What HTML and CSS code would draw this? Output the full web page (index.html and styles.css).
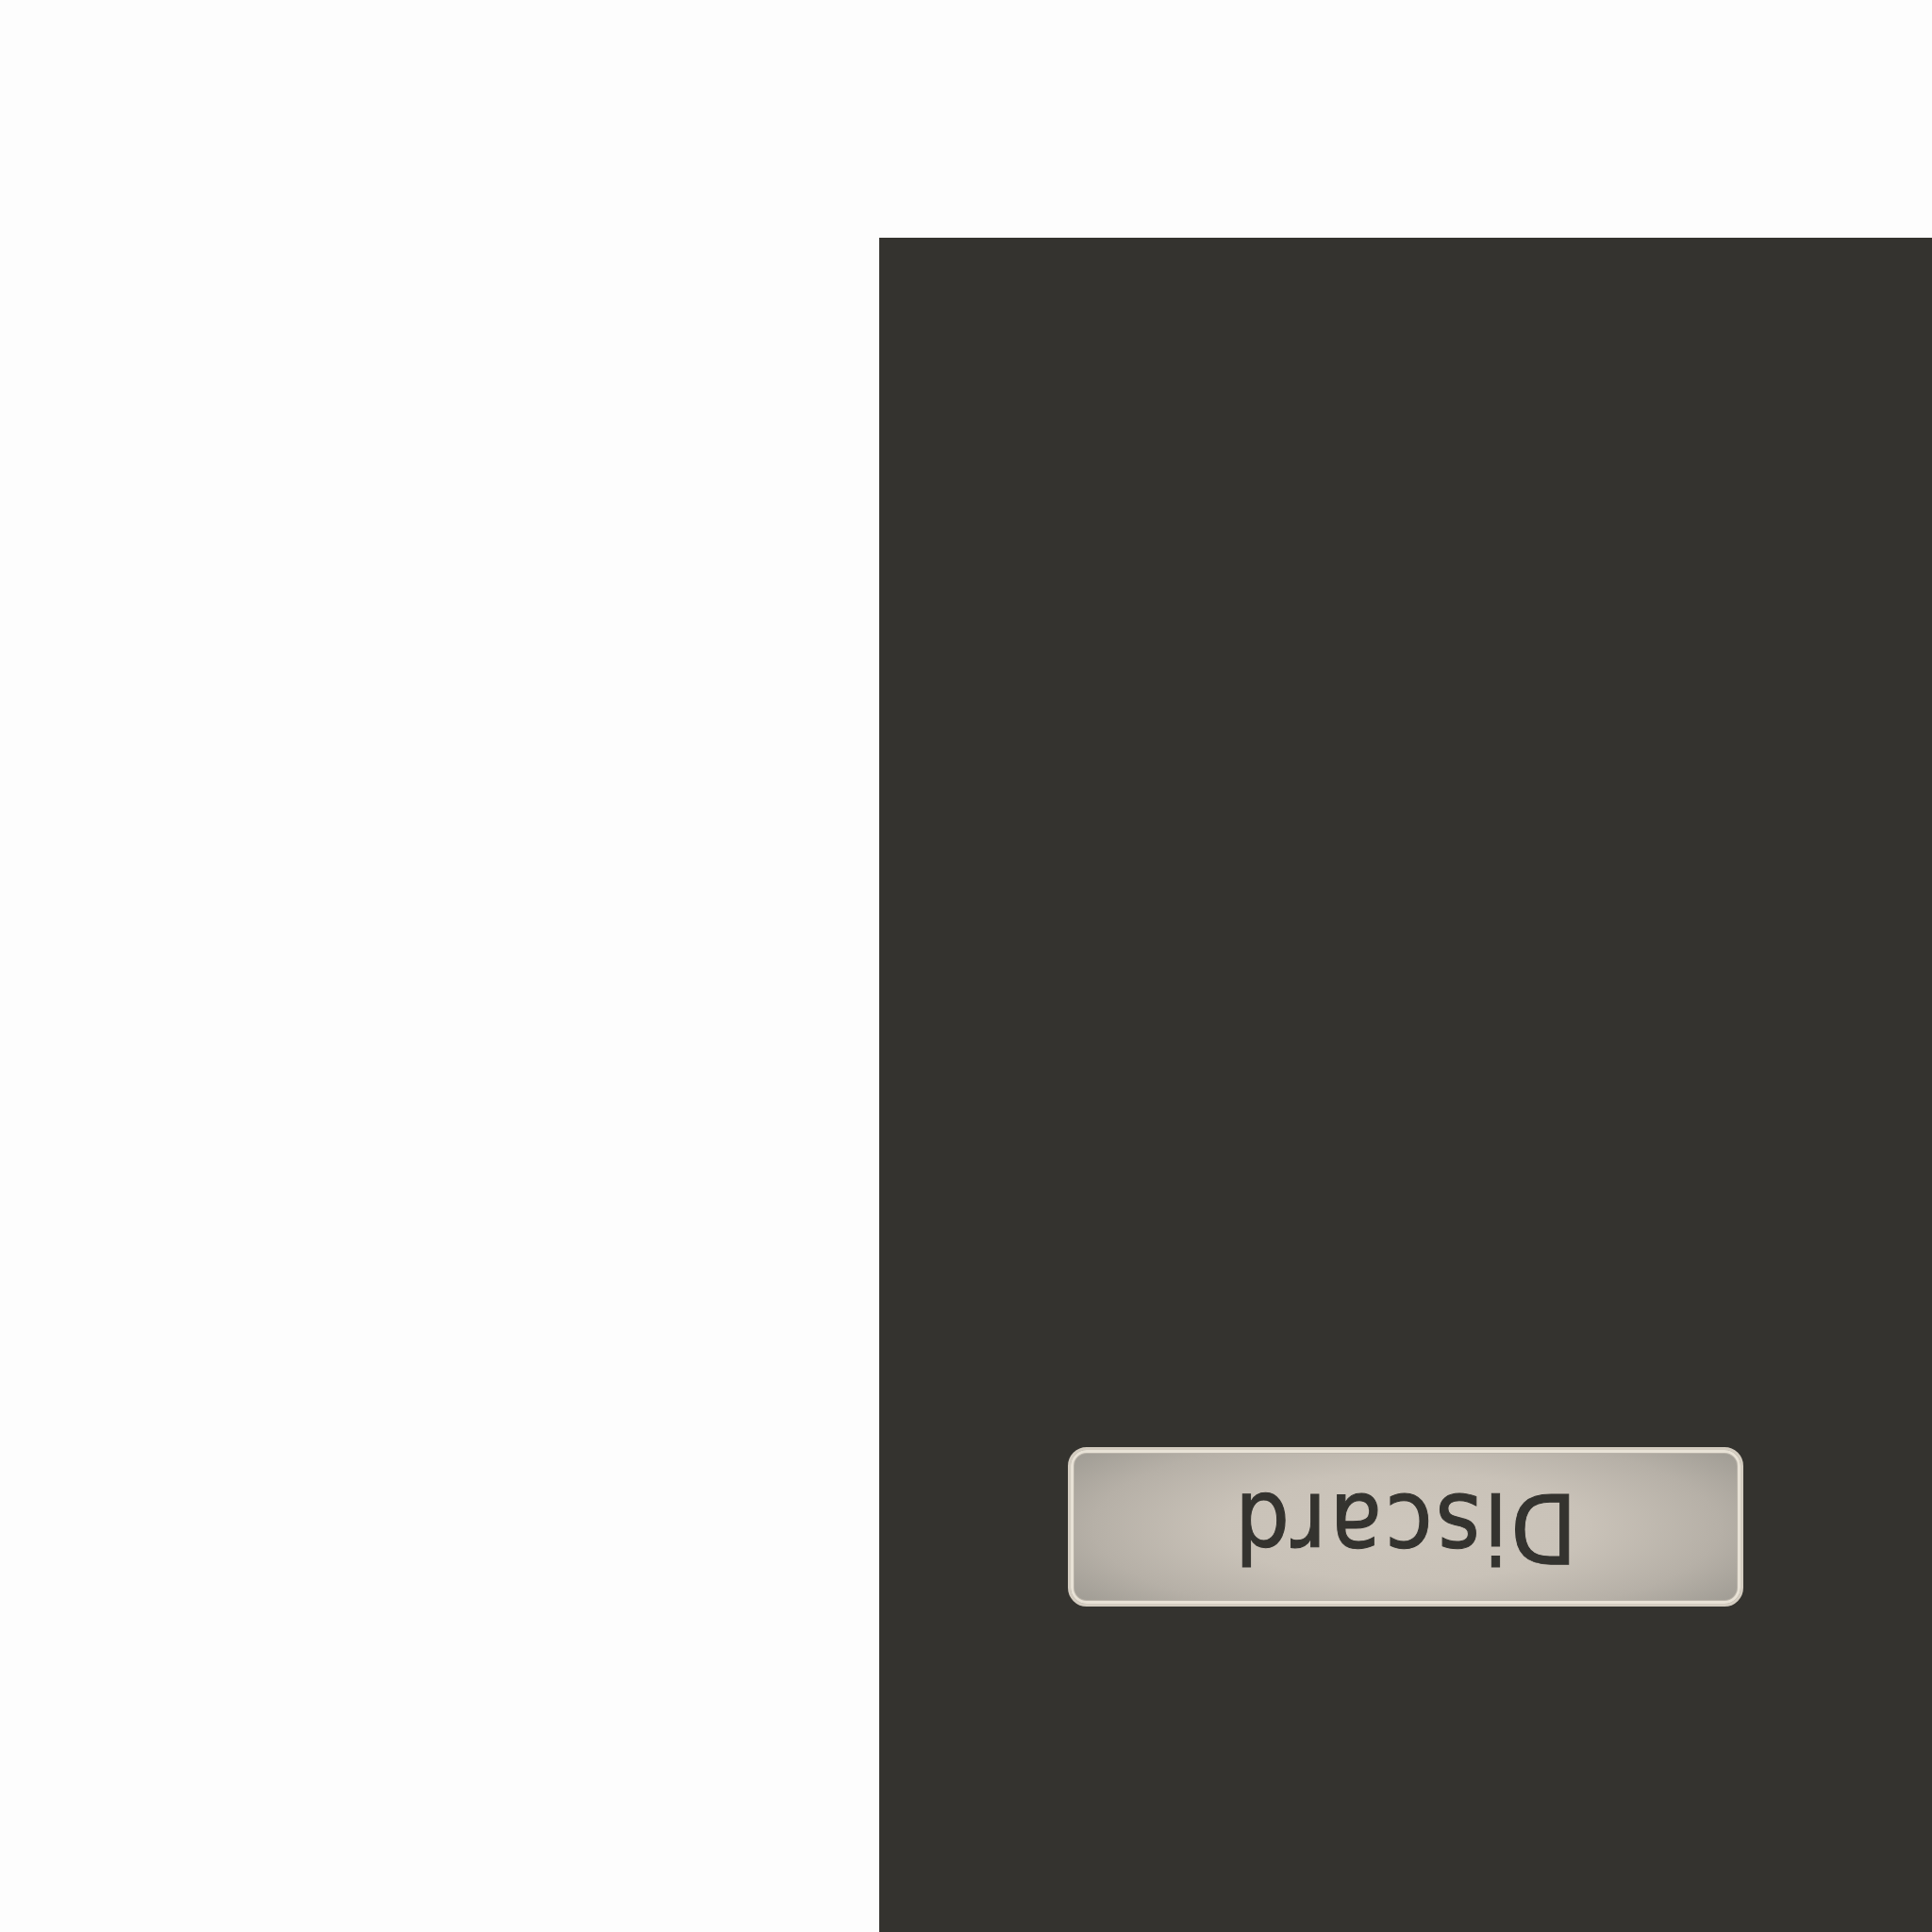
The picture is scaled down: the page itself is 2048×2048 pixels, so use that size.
FILE: index.html
```html
<!DOCTYPE html>
<html>
<head>
<meta charset="utf-8">
<link rel="stylesheet" href="styles.css">
</head>
<body>
<div class="page">
  <div class="panel">
    <button class="discard"><span class="label">Discard</span></button>
  </div>
</div>
</body>
</html>
```
FILE: styles.css
```css
html, body {
  margin: 0;
  padding: 0;
  background: #fdfdfd;
}
.page {
  width: 2048px;
  height: 2048px;
  padding: 252px 0 0 932px;
  box-sizing: border-box;
  display: flex;
}
.panel {
  flex: 1;
  background: #34332f;
  display: flex;
  flex-direction: column;
  justify-content: flex-end;
  align-items: center;
  padding-bottom: 345px;
}
.discard {
  width: 716px;
  height: 169px;
  box-sizing: border-box;
  border: 3px solid #d3ccc0;
  border-radius: 20px;
  box-shadow: inset 0 0 0 3px #e8e2d6, inset 0 0 0 4px #b9b3a9;
  background: radial-gradient(ellipse 60% 78% at 50% 50%, #cdc6bc 0%, #c9c2b8 45%, #b6b0a7 78%, #a29e96 100%);
  display: flex;
  align-items: center;
  justify-content: center;
  padding: 0;
  cursor: pointer;
}
.label {
  display: block;
  transform: rotate(180deg);
  font-family: "DejaVu Sans Condensed", "DejaVu Sans", sans-serif;
  font-size: 102px;
  line-height: 1;
  letter-spacing: 3px;
  padding-left: 3px;
  -webkit-text-stroke: 1px #34332f;
  color: #34332f;
}
```
